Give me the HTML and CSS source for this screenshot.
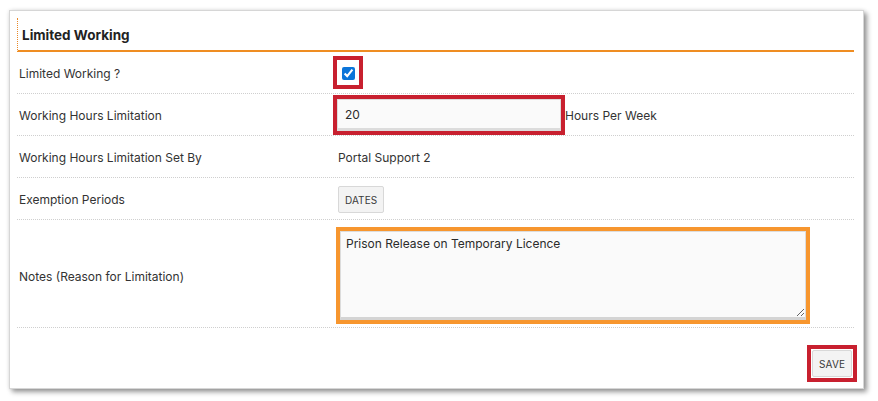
FILE: index.html
```html
<!DOCTYPE html>
<html>
<head>
<meta charset="utf-8">
<link rel="stylesheet" href="styles.css">
</head>
<body>
<div class="panel">
  <div class="header"><h2 class="title">Limited Working</h2></div>
  <div class="row">
    <div class="label">Limited Working ?</div>
    <div class="value"><span class="hl-red hl-check"><input type="checkbox" checked class="check"></span></div>
  </div>
  <div class="row">
    <div class="label">Working Hours Limitation</div>
    <div class="value"><span class="hl-red hl-input"><input type="text" value="20" class="text-input"></span><span class="unit">Hours Per Week</span></div>
  </div>
  <div class="row">
    <div class="label">Working Hours Limitation Set By</div>
    <div class="value plain">Portal Support 2</div>
  </div>
  <div class="row">
    <div class="label">Exemption Periods</div>
    <div class="value plain"><button class="btn">DATES</button></div>
  </div>
  <div class="row row-notes">
    <div class="label label-notes">Notes (Reason for Limitation)</div>
    <div class="value"><span class="hl-orange"><textarea class="notes">Prison Release on Temporary Licence</textarea></span></div>
  </div>
  <div class="footer">
    <span class="hl-red hl-save"><button class="btn btn-save">SAVE</button></span>
  </div>
</div>
</body>
</html>
```
FILE: styles.css
```css
* { box-sizing: border-box; }
html, body { margin: 0; padding: 0; background: #ffffff; }
body {
  width: 878px;
  height: 401px;
  padding: 10px 0 0 9px;
  font-family: Inter, "Noto Sans", sans-serif;
  font-size: 12px;
  color: #333333;
  overflow: hidden;
}
.panel {
  width: 855px;
  height: 379px;
  border: 1px solid #d6d6d6;
  background: #fff;
  box-shadow: 3px 3px 5px rgba(0,0,0,0.4), 0 0 4px rgba(0,0,0,0.1);
  padding: 7px 9px 0 7px;
}
.header {
  height: 34px;
  border-left: 1px dotted #e8892a;
  border-bottom: 2px solid #ef8d22;
  display: flex;
  align-items: center;
  padding-left: 4px;
  padding-top: 1px;
}
.title {
  margin: 0;
  font-size: 13.5px;
  font-weight: 700;
  color: #222222;
}
.row {
  display: grid;
  grid-template-columns: 316px 1fr;
  height: 42px;
  border-bottom: 1px dotted #cfcfcf;
  align-items: center;
}
.row-notes { height: 108px; }
.label { padding-left: 2px; padding-top: 2px; }
.label-notes { padding-top: 6px; }
.value { display: flex; align-items: center; }
.value.plain { padding-left: 5px; padding-top: 2px; }
.hl-red { border: 4px solid #c8202f; display: inline-flex; }
.hl-check { padding: 7px 4px 5px 5px; }
.check {
  margin: 0;
  width: 13px;
  height: 13px;
  accent-color: #0b75d9;
}
.hl-input { margin-top: 1px; }
.text-input {
  width: 224px;
  height: 32px;
  border: 1px solid #dcdcdc;
  border-bottom: 3px solid #dcdcdc;
  background: #fafafa;
  font-family: inherit;
  font-size: 12px;
  color: #2b2b2b;
  padding: 1px 0 0 7px;
  outline: none;
}
.unit { padding-top: 1px; }
.btn {
  font-family: inherit;
  font-size: 10px;
  color: #3a3a3a;
  background: #f3f3f3;
  border: 1px solid #d8d8d8;
  border-radius: 2px;
  height: 27px;
  padding: 0 6px;
  letter-spacing: 0.1px;
}
.hl-orange {
  border: 4px solid #f7962e;
  display: inline-flex;
  margin-left: 3px;
  margin-top: 3px;
}
.notes {
  width: 466px;
  height: 89px;
  border: 1px solid #dcdcdc;
  border-bottom: 3px solid #d4d4d4;
  background: #fafafa;
  font-family: inherit;
  font-size: 12px;
  color: #2b2b2b;
  padding: 4px 5px;
  resize: vertical;
  outline: none;
  display: block;
}
.footer {
  display: flex;
  justify-content: flex-end;
  padding-top: 17px;
  margin-right: -3px;
}
.hl-save { padding: 1px; }
.btn-save { height: 27px; padding: 0 6px; }
```
